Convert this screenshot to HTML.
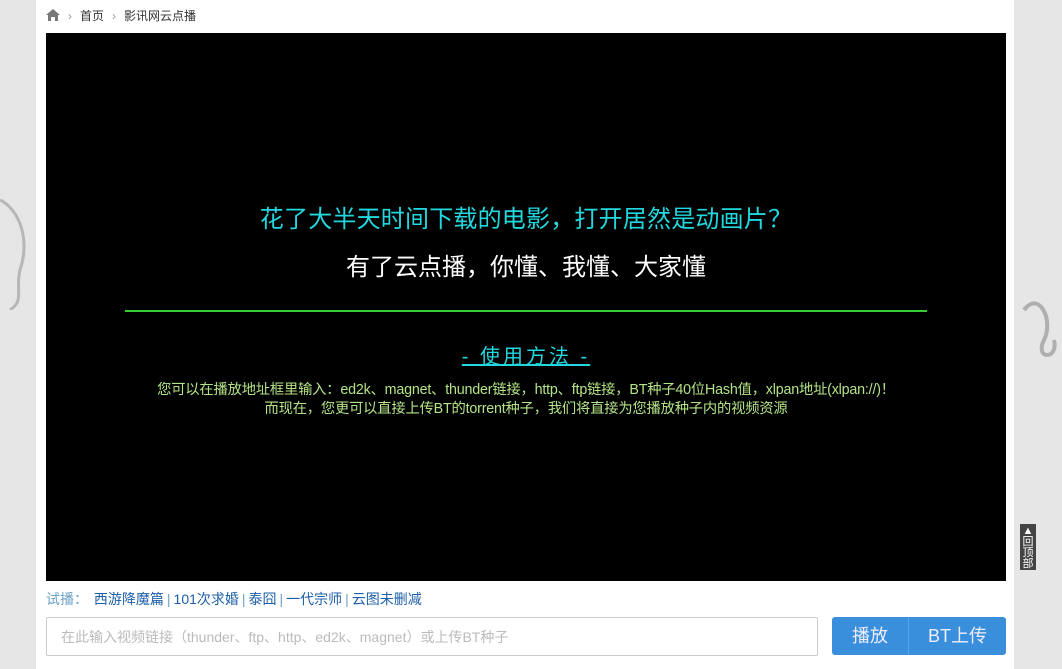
<!DOCTYPE html>
<html><head><meta charset="utf-8"><style>
*{margin:0;padding:0;box-sizing:border-box}
body{width:1062px;height:669px;background:#e6e6e6;font-family:"Liberation Sans","Noto Sans CJK SC",sans-serif;position:relative;overflow:hidden}
.wrap{position:absolute;left:36px;top:0;width:978px;height:669px;background:#fff}
.crumb{position:absolute;left:10px;top:8px;font-size:12px;color:#333;line-height:16px}
.crumb span.s{color:#999;margin:0 8px}
.box{position:absolute;left:10px;top:33px;width:960px;height:548px;background:#000;text-align:center}
.h1{position:absolute;top:172px;left:0;width:100%;font-size:24px;color:#22d8df;line-height:30px;letter-spacing:0.2px}
.h2{position:absolute;top:220px;left:0;width:100%;font-size:24px;color:#fff;line-height:30px}
.line{position:absolute;left:79px;top:277px;width:802px;height:2px;background:#3c3}
.h3{position:absolute;top:310px;left:0;width:100%;font-size:20px;color:#22d8df;letter-spacing:3px;text-decoration:underline;line-height:28px}
.p{position:absolute;left:0;width:100%;font-size:14.3px;color:#b3e386;line-height:18px;letter-spacing:-0.2px}
.try{position:absolute;left:10px;top:590px;font-size:14px;color:#1d5fa8;line-height:18px}
.try .l{color:#6da2c9;margin-right:2px}
.try .b{color:#6da2c9;margin:0 3px}
.inp{position:absolute;left:10px;top:617px;width:772px;height:39px;border:1px solid #ccc;border-radius:2px;font-size:14px;color:#bbb;padding:9px 14px}
.btn{position:absolute;top:617px;height:38px;background:#3a8fdc;color:#eef;font-size:18px;line-height:38px;text-align:center}
.top{position:absolute;left:1020px;top:524px;width:16px;height:46px;background:#444;color:#fff;font-size:11px;line-height:11px;text-align:center;padding-top:2px}
</style></head><body>
<svg style="position:absolute;left:0;top:180px" width="36" height="130"><path d="M0 20 C20 30 30 60 20 90 C15 110 25 120 10 130" stroke="#888" fill="none" stroke-width="3" opacity=".5"/></svg>
<svg style="position:absolute;left:1014px;top:280px" width="48" height="90"><path d="M10 30 C25 10 40 40 30 60 C20 80 45 80 40 60" stroke="#777" fill="none" stroke-width="4" opacity=".5"/></svg>
<div class="wrap">
<div class="crumb"><svg width="14" height="12" style="vertical-align:-1px"><path d="M7 0 L14 6 H12 V12 H9 V8 H5 V12 H2 V6 H0 Z" fill="#777"/></svg><span class="s">›</span>首页<span class="s">›</span>影讯网云点播</div>
<div class="box">
<div class="h1">花了大半天时间下载的电影，打开居然是动画片？</div>
<div class="h2">有了云点播，你懂、我懂、大家懂</div>
<div class="line"></div>
<div class="h3">- 使用方法 -</div>
<div class="p" style="top:348px">您可以在播放地址框里输入：ed2k、magnet、thunder链接，http、ftp链接，BT种子40位Hash值，xlpan地址(xlpan://)！</div>
<div class="p" style="top:367px">而现在，您更可以直接上传BT的torrent种子，我们将直接为您播放种子内的视频资源</div>
</div>
<div class="try"><span class="l">试播：</span> 西游降魔篇<span class="b">|</span>101次求婚<span class="b">|</span>泰囧<span class="b">|</span>一代宗师<span class="b">|</span>云图未删减</div>
<div class="inp">在此输入视频链接（thunder、ftp、http、ed2k、magnet）或上传BT种子</div>
<div class="btn" style="left:796px;width:76px;border-radius:3px 0 0 3px">播放</div>
<div class="btn" style="left:872px;width:98px;border-left:1px solid #5aa3e6;border-radius:0 3px 3px 0">BT上传</div>
</div>
<div class="top">▲<br>回<br>顶<br>部</div>
</body></html>
